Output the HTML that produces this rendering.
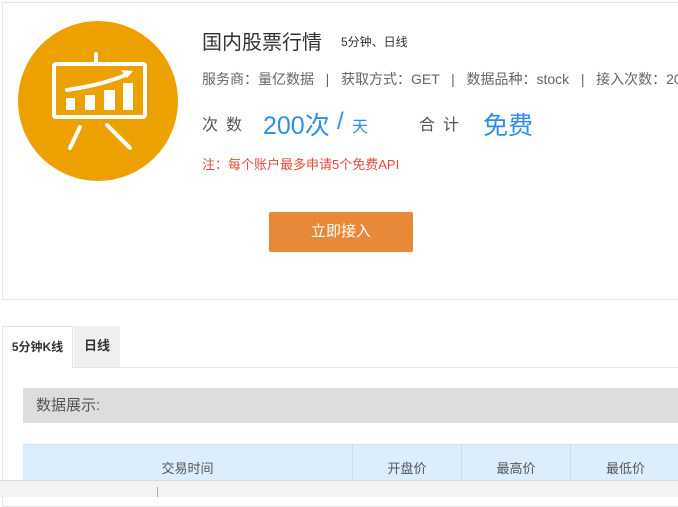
<!DOCTYPE html><html><head><meta charset="utf-8"><style>
*{margin:0;padding:0;box-sizing:border-box}
body{width:678px;height:497px;overflow:hidden;background:#fff;font-family:"Liberation Sans","Noto Sans CJK SC",sans-serif;position:relative;color:#333}
.a{position:absolute;white-space:nowrap}
</style></head><body>
<div class="a" style="left:2px;top:2px;width:700px;height:298px;border:1px solid #e4e4e4"></div>
<svg class="a" style="left:18px;top:21px" width="160" height="160" viewBox="0 0 160 160">
<circle cx="80" cy="80" r="80" fill="#eda100"/>
<g stroke="#fff" stroke-width="4" fill="none" stroke-linecap="round">
<line x1="78" y1="33" x2="78" y2="41"/>
<rect x="36" y="43" width="91" height="53" rx="2"/>
<path d="M49 69 Q85 64 110 53"/>
<line x1="62" y1="106" x2="52" y2="127"/>
<line x1="89" y1="104" x2="112" y2="127"/>
</g>
<path d="M103 49 L115 50 L109 57 Z" fill="#fff"/>
<rect x="48" y="77" width="9" height="12" fill="#fff"/>
<rect x="67" y="74" width="10" height="15" fill="#fff"/>
<rect x="86" y="69" width="11" height="20" fill="#fff"/>
<rect x="105" y="62" width="10" height="27" fill="#fff"/>
</svg>
<div class="a" style="left:202px;top:26px;font-size:20px;color:#333">国内股票行情</div>
<div class="a" style="left:341px;top:33px;font-size:12px;color:#333">5分钟、日线</div>
<div class="a" style="left:202px;top:69px;font-size:14px;color:#666">服务商：量亿数据 &nbsp; | &nbsp; 获取方式：GET &nbsp; | &nbsp; 数据品种：stock &nbsp; | &nbsp; 接入次数：200</div>
<div class="a" style="left:202px;top:111px;font-size:16px;color:#555;letter-spacing:8px">次数</div>
<div class="a" style="left:263px;top:106px;font-size:25px;color:#2f8ee8">200次</div>
<div class="a" style="left:337px;top:108px;font-size:24px;color:#2f8ee8">/</div>
<div class="a" style="left:352px;top:113px;font-size:16px;color:#2f8ee8">天</div>
<div class="a" style="left:419px;top:111px;font-size:16px;color:#555;letter-spacing:8px">合计</div>
<div class="a" style="left:483px;top:106px;font-size:25px;color:#2f8ee8">免费</div>
<div class="a" style="left:202px;top:154px;font-size:13px;color:#e04b3a">注：每个账户最多申请5个免费API</div>
<div class="a" style="left:269px;top:212px;width:144px;height:40px;background:#e8893a;border-radius:2px;color:#fff;font-size:15px;line-height:40px;text-align:center">立即接入</div>
<div class="a" style="left:2px;top:367px;width:700px;height:140px;border:1px solid #e4e4e4"></div>
<div class="a" style="left:2px;top:326px;width:71px;height:42px;background:#fff;border:1px solid #e4e4e4;border-bottom:none;font-size:12px;font-weight:bold;line-height:40px;text-align:center">5分钟K线</div>
<div class="a" style="left:74px;top:326px;width:46px;height:41px;background:#eef0f2;font-size:13px;font-weight:bold;line-height:40px;text-align:center">日线</div>
<div class="a" style="left:23px;top:388px;width:660px;height:35px;background:#dddddd;font-size:15px;color:#555;line-height:35px;padding-left:13px">数据展示:</div>
<div class="a" style="left:23px;top:444px;width:660px;height:40px;background:#dcedfc;border-top:1px solid #cfe0ee;font-size:13px;color:#555">
<div class="a" style="left:0;top:0;width:330px;height:40px;line-height:48px;text-align:center;border-right:1px solid #cdd9e3">交易时间</div>
<div class="a" style="left:330px;top:0;width:109px;height:40px;line-height:48px;text-align:center;border-right:1px solid #cdd9e3">开盘价</div>
<div class="a" style="left:439px;top:0;width:109px;height:40px;line-height:48px;text-align:center;border-right:1px solid #cdd9e3">最高价</div>
<div class="a" style="left:548px;top:0;width:109px;height:40px;line-height:48px;text-align:center">最低价</div>
</div>
<div class="a" style="left:0;top:480px;width:678px;height:17px;background:#f3f3f3;border-top:1px solid #dcdcdc"></div>
<div class="a" style="left:157px;top:487px;width:1px;height:10px;background:#aaa"></div>
</body></html>
